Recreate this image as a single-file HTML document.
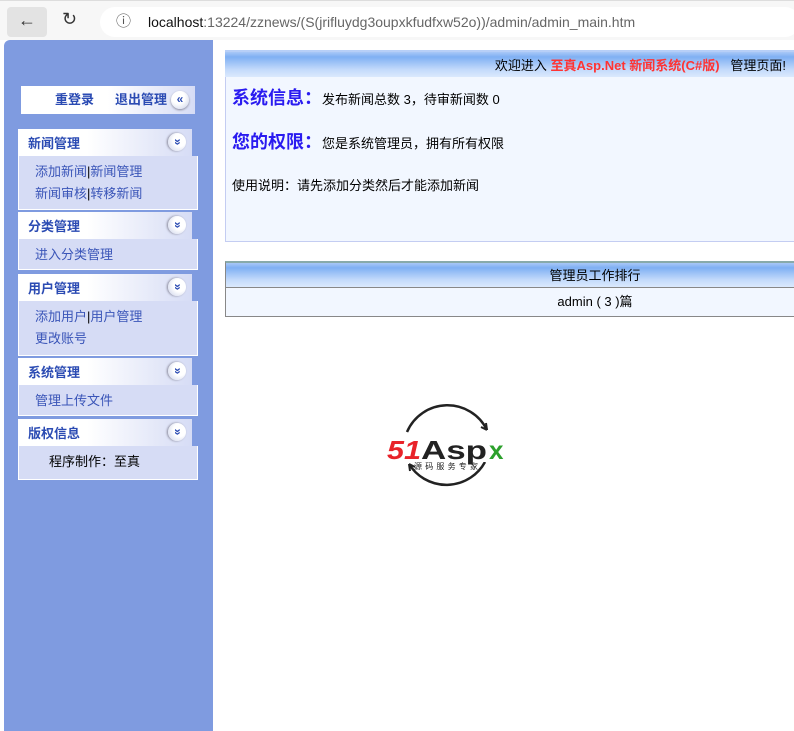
<!DOCTYPE html>
<html><head><meta charset="utf-8"><style>
*{margin:0;padding:0;box-sizing:border-box}
body{width:794px;height:731px;overflow:hidden;background:#fff;font-family:"Liberation Sans","Noto Sans CJK SC",sans-serif;font-size:12px;position:relative}
.chrome{position:absolute;left:0;top:0;width:794px;height:40px;background:#f7f7f7;border-top:1px solid #ddd}
.back{position:absolute;left:7px;top:6px;width:40px;height:30px;background:#e3e3e3;border-radius:4px}
.url{position:absolute;left:100px;top:6px;width:700px;height:30px;background:#fff;border-radius:15px;font-size:14px;line-height:30px;padding-left:48px;color:#666}
.url b{font-weight:normal;color:#111}
.side{position:absolute;left:4px;top:40px;width:209px;height:691px;background:#7f9be0;border-top-left-radius:6px}
.login{position:absolute;left:21px;top:86px;width:174px;height:28px;background:linear-gradient(90deg,#fff 50%,#d6dcf5);font-weight:bold;color:#2b4bb3;font-size:13px;line-height:28px}
.circ{position:absolute;width:18px;height:18px;border-radius:50%;background:radial-gradient(circle at 40% 35%,#fff 40%,#c8cfe8);color:#2b4bb3;font-size:12px;line-height:17px;text-align:center;font-weight:bold;box-shadow:0 1px 2px #889}
.dn{transform:rotate(90deg)}
.sec{position:absolute;left:18px;width:180px}
.hd{height:27px;background:linear-gradient(90deg,#fff 40%,#d6dcf5);width:174px;font-weight:bold;color:#2b4bb3;font-size:13px;line-height:30px;padding-left:10px;position:relative}
.bd{background:#d6dcf5;border:1px solid #fff;border-top:none;color:#3a55b8;font-size:13px;padding:5px 0 0 16px;line-height:22px}
.main{position:absolute;left:225px}
.bar{background:linear-gradient(#a9c8f7,#7fb0f3 20%,#c3dafb 70%,#dbe9fd);border-top:2px solid #b7cff7}
</style></head><body>
<div class="chrome"><div class="back"><span style="position:absolute;left:11px;top:3px;font-size:18px;color:#333">&#8592;</span></div>
<span style="position:absolute;left:62px;top:8px;font-size:18px;color:#333">&#8635;</span>
<div class="url"><span style="position:absolute;left:16px;top:0;color:#555;font-size:15px">&#9432;</span><b>localhost</b>:13224/zznews/(S(jrifluydg3oupxkfudfxw52o))/admin/admin_main.htm</div></div>
<div class="side"></div>
<div class="login"><span style="margin-left:34px">重登录</span><span style="margin-left:21px">退出管理</span><div class="circ" style="left:150px;top:5px">«</div></div>
<div class="sec" style="top:129px"><div class="hd">新闻管理<div class="circ dn" style="left:150px;top:4px">»</div></div><div class="bd" style="height:54px">添加新闻<span style="color:#000">|</span>新闻管理<br>新闻审核<span style="color:#000">|</span>转移新闻</div></div>
<div class="sec" style="top:212px"><div class="hd">分类管理<div class="circ dn" style="left:150px;top:4px">»</div></div><div class="bd" style="height:31px">进入分类管理</div></div>
<div class="sec" style="top:274px"><div class="hd">用户管理<div class="circ dn" style="left:150px;top:4px">»</div></div><div class="bd" style="height:55px">添加用户<span style="color:#000">|</span>用户管理<br>更改账号</div></div>
<div class="sec" style="top:358px"><div class="hd">系统管理<div class="circ dn" style="left:150px;top:4px">»</div></div><div class="bd" style="height:31px">管理上传文件</div></div>
<div class="sec" style="top:419px"><div class="hd">版权信息<div class="circ dn" style="left:150px;top:4px">»</div></div><div class="bd" style="height:34px;color:#000;padding-left:30px">程序制作：至真</div></div>
<div class="main bar" style="top:50px;width:569px;height:27px;text-align:right;font-size:13px;line-height:28px;padding-right:8px">欢迎进入 <span style="color:#f33;font-weight:bold">至真Asp.Net 新闻系统(C#版)</span>&nbsp;&nbsp; 管理页面!</div>
<div class="main" style="top:77px;width:569px;height:165px;background:#f2f7ff;border:1px solid #c4cdf2;border-right:none;border-top:none">
<div style="position:absolute;left:6px;top:7px;white-space:nowrap"><span style="color:#2a1bf0;font-size:18px;font-weight:bold">系统信息：</span><span style="font-size:13px">发布新闻总数 3，待审新闻数 0</span></div>
<div style="position:absolute;left:6px;top:51px;white-space:nowrap"><span style="color:#2a1bf0;font-size:18px;font-weight:bold">您的权限：</span><span style="font-size:13px">您是系统管理员，拥有所有权限</span></div>
<div style="position:absolute;left:6px;top:98px;font-size:13px">使用说明：请先添加分类然后才能添加新闻</div></div>
<div class="main bar" style="top:261px;width:569px;height:27px;border-left:1px solid #888;border-top:2px solid #8aa;border-bottom:1px solid #888;text-align:center;font-size:13px;line-height:26px;padding-left:170px">管理员工作排行</div>
<div class="main" style="top:288px;width:569px;height:29px;background:#f2f7ff;border-left:1px solid #888;border-bottom:1px solid #888;text-align:center;font-size:13px;line-height:28px;padding-left:170px">admin ( 3 )篇</div>
<svg style="position:absolute;left:385px;top:400px" width="130" height="96" viewBox="0 0 130 96">
<path d="M22 32 A44 44 0 0 1 102 30" fill="none" stroke="#222" stroke-width="2.5"/>
<path d="M102 30 l-1 -7 M102 30 l-6 -3" stroke="#222" stroke-width="2"/>
<path d="M100 62 A44 44 0 0 1 24 64" fill="none" stroke="#222" stroke-width="2.5"/>
<path d="M24 64 l1 7 M24 64 l6 3" stroke="#222" stroke-width="2"/>
<rect x="0" y="34" width="128" height="28" fill="#fff"/>
<text x="2" y="59" font-size="26" font-weight="bold" font-style="italic" fill="#e8232a" font-family="Liberation Sans" textLength="34" lengthAdjust="spacingAndGlyphs">51</text>
<text x="36" y="59" font-size="26" font-weight="bold" fill="#222" font-family="Liberation Sans" textLength="66" lengthAdjust="spacingAndGlyphs">Asp</text>
<text x="104" y="59" font-size="26" font-weight="bold" fill="#2ca02c" font-family="Liberation Sans">x</text>
<text x="29" y="69" font-size="8" fill="#222" font-family="Noto Sans CJK SC" textLength="64">源码服务专家</text>
</svg>
</body></html>
